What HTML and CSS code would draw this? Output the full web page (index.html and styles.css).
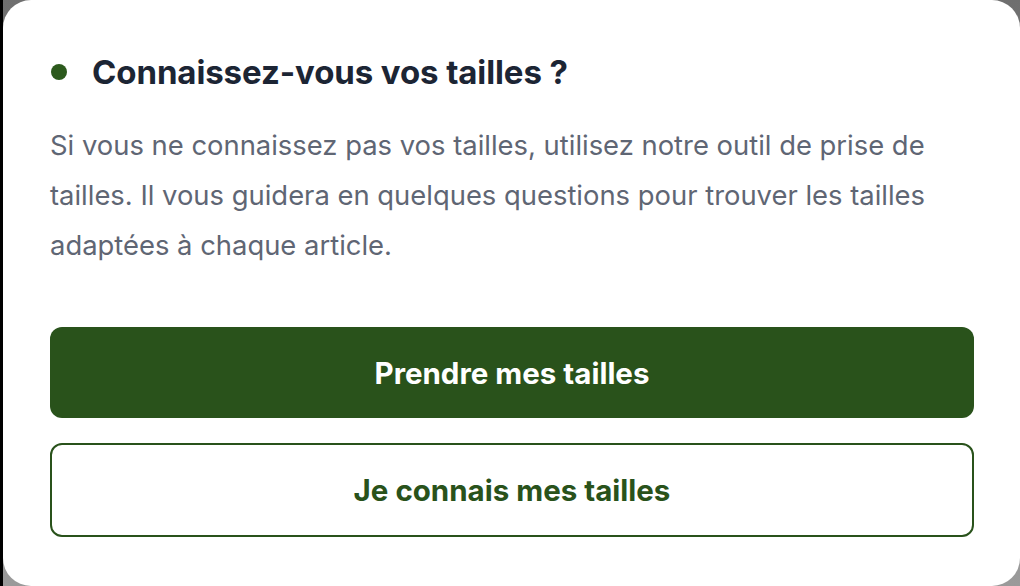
FILE: index.html
```html
<!DOCTYPE html>
<html lang="fr">
<head>
<meta charset="utf-8">
<link rel="stylesheet" href="styles.css">
</head>
<body>
<div class="card">
  <div class="title-row">
    <span class="dot"></span>
    <h2 class="title">Connaissez-vous vos tailles ?</h2>
  </div>
  <p class="desc">Si vous ne connaissez pas vos tailles, utilisez notre outil de prise de tailles. Il vous guidera en quelques questions pour trouver les tailles adaptées à chaque article.</p>
  <div class="actions">
    <button class="btn btn-primary">Prendre mes tailles</button>
    <button class="btn btn-outline">Je connais mes tailles</button>
  </div>
</div>
</body>
</html>
```

FILE: styles.css
```css
html, body {
  margin: 0;
  height: 100%;
}
body {
  background: linear-gradient(180deg, #6f6f6f 0%, #9a9a9a 100%);
  border-left: 3px solid #000;
  box-sizing: border-box;
  font-family: Inter, "Noto Sans", sans-serif;
  overflow: hidden;
}
.card {
  background: #fff;
  height: 586px;
  border-radius: 28px;
  box-sizing: border-box;
  padding: 52px 46px 0 47px;
}
.title-row {
  display: flex;
  align-items: center;
  gap: 25px;
  margin-left: 1px;
}
.dot {
  width: 16px;
  height: 16px;
  border-radius: 50%;
  background: #2c5a1d;
  flex: none;
}
.title {
  margin: 0;
  font-size: 33px;
  font-weight: 700;
  color: #1c2534;
  line-height: 40px;
  letter-spacing: -0.1px;
}
.desc {
  margin: 28px 0 0 0;
  font-size: 27.4px;
  line-height: 50px;
  color: #5f6674;
}
.actions {
  display: flex;
  flex-direction: column;
  gap: 25px;
  margin-top: 57px;
}
.btn {
  font-family: inherit;
  font-size: 29.5px;
  font-weight: 700;
  border-radius: 12px;
  width: 100%;
  cursor: pointer;
}
.btn-primary {
  background: #29521b;
  color: #fff;
  border: none;
  height: 91px;
}
.btn-outline {
  background: #fff;
  color: #29521b;
  border: 2px solid #29521b;
  height: 94px;
}
```
